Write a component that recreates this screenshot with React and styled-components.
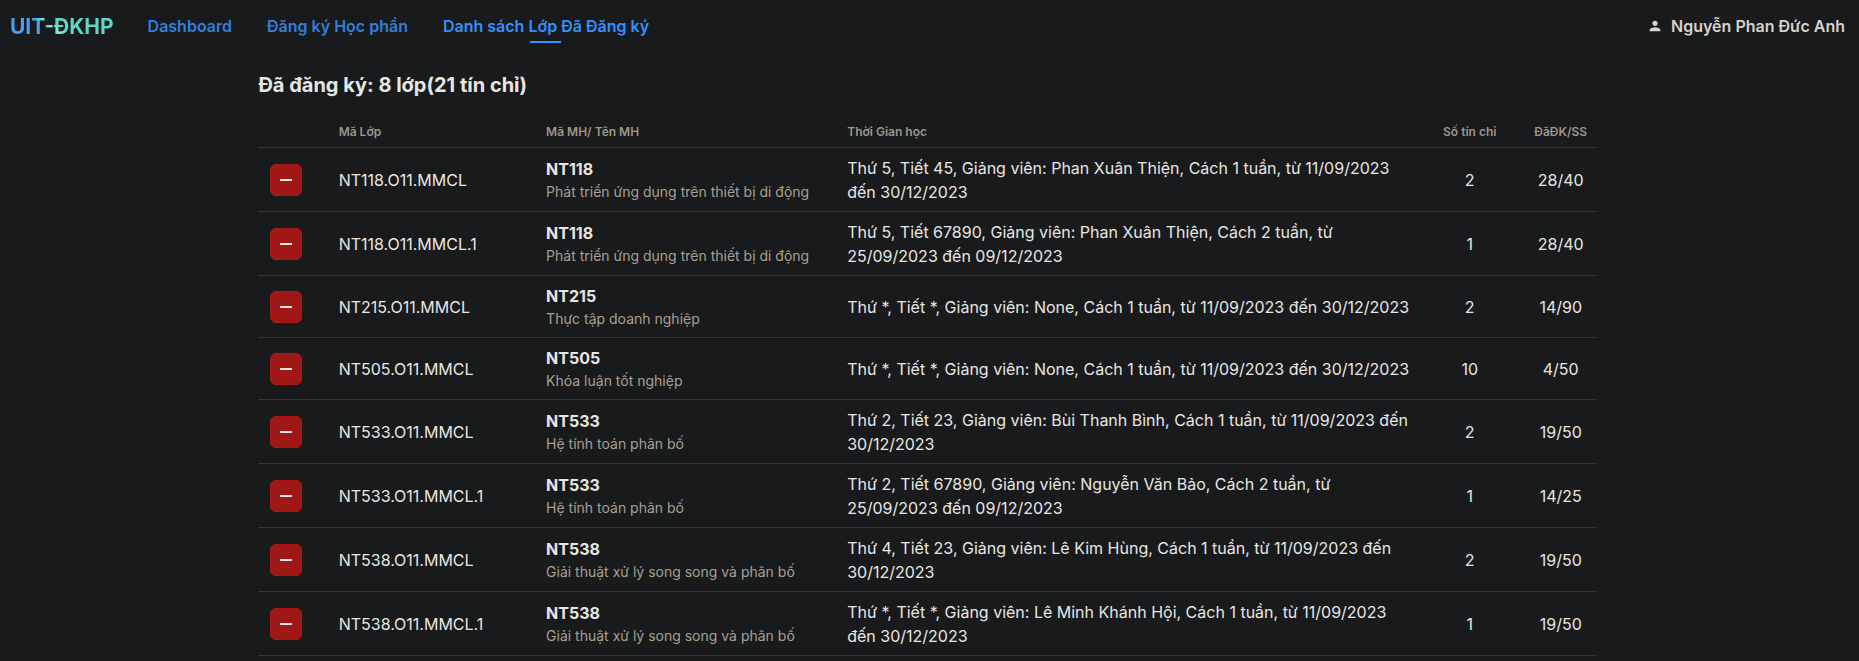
import React from 'react';
import styled, { createGlobalStyle } from 'styled-components';
import { MdPerson } from 'react-icons/md';

const Global = createGlobalStyle`
  * { box-sizing: border-box; }
  body {
    margin: 0;
    background: #181a1b;
    color: #e8e6e3;
    font-family: Inter, "Liberation Sans", sans-serif;
    font-size: 16px;
  }
`;

const Header = styled.header`
  display: flex;
  align-items: center;
  height: 52px;
  padding: 0 14px 0 10px;
`;

const Brand = styled.a`
  margin-right: 34px;
  font-size: 21px;
  font-weight: 700;
  text-decoration: none;
  color: transparent;
  background: linear-gradient(45deg, #4c9ff0 0%, #4c9ff0 35%, #7af0dc 42%, #5fd6c6 50%, #5fd6c6 100%);
  background-clip: text;
`;

const Nav = styled.nav`
  display: flex;
  gap: 35px;
  flex: 1;
`;

const NavLink = styled.a`
  position: relative;
  font-weight: 600;
  line-height: 24px;
  text-decoration: none;
  color: ${(p) => (p.$active ? '#3391ff' : '#3080dc')};

  &::after {
    content: '';
    display: ${(p) => (p.$active ? 'block' : 'none')};
    position: absolute;
    left: calc(50% - 16px);
    bottom: -5px;
    width: 31px;
    height: 2px;
    background: #3391ff;
  }
`;

const User = styled.button`
  display: flex;
  align-items: center;
  gap: 8px;
  padding: 0;
  border: 0;
  background: none;
  color: #d6d2cd;
  font: inherit;
  font-weight: 600;
`;

const Main = styled.main`
  width: 72%;
  margin: 0 auto 0 13.9%;
`;

const Title = styled.h1`
  margin: 0;
  padding: 18px 0 16px;
  font-size: 20px;
  line-height: 30px;
  font-weight: 700;
`;

const Table = styled.table`
  width: 100%;
  border-collapse: separate;
  border-spacing: 0;
  table-layout: fixed;
`;

const Col = styled.col`
  width: ${(p) => p.$w};
`;

const Th = styled.th`
  height: 32px;
  padding: 0 ${(p) => (p.$center ? 8 : 12)}px;
  border-bottom: 1px solid #213a52;
  color: #9e9689;
  font-size: 12px;
  font-weight: 600;
  white-space: nowrap;
  text-align: ${(p) => (p.$center ? 'center' : 'left')};
`;

const Td = styled.td`
  padding: 8px 0 7px ${(p) => (p.$center ? 0 : 12)}px;
  border-bottom: 1px solid #213a52;
  line-height: 24px;
  text-align: ${(p) => (p.$center ? 'center' : 'left')};
`;

const Subject = styled.div`
  font-weight: 700;
  line-height: 24px;
`;

const SubjectName = styled.div`
  color: #a8a095;
  font-size: 14px;
  line-height: 22px;
`;

const RemoveButton = styled.button`
  display: flex;
  align-items: center;
  justify-content: center;
  width: 32px;
  height: 32px;
  padding: 0;
  border: 1px solid #b01818;
  border-radius: 6px;
  background: #a01717;
  color: #e8e6e3;
`;

const rows = [
  ['NT118.O11.MMCL', 'NT118', 'Phát triển ứng dụng trên thiết bị di động', 'Thứ 5, Tiết 45, Giảng viên: Phan Xuân Thiện, Cách 1 tuần, từ 11/09/2023 đến 30/12/2023', 2, '28/40'],
  ['NT118.O11.MMCL.1', 'NT118', 'Phát triển ứng dụng trên thiết bị di động', 'Thứ 5, Tiết 67890, Giảng viên: Phan Xuân Thiện, Cách 2 tuần, từ 25/09/2023 đến 09/12/2023', 1, '28/40'],
  ['NT215.O11.MMCL', 'NT215', 'Thực tập doanh nghiệp', 'Thứ *, Tiết *, Giảng viên: None, Cách 1 tuần, từ 11/09/2023 đến 30/12/2023', 2, '14/90'],
  ['NT505.O11.MMCL', 'NT505', 'Khóa luận tốt nghiệp', 'Thứ *, Tiết *, Giảng viên: None, Cách 1 tuần, từ 11/09/2023 đến 30/12/2023', 10, '4/50'],
  ['NT533.O11.MMCL', 'NT533', 'Hệ tính toán phân bố', 'Thứ 2, Tiết 23, Giảng viên: Bùi Thanh Bình, Cách 1 tuần, từ 11/09/2023 đến 30/12/2023', 2, '19/50'],
  ['NT533.O11.MMCL.1', 'NT533', 'Hệ tính toán phân bố', 'Thứ 2, Tiết 67890, Giảng viên: Nguyễn Văn Bảo, Cách 2 tuần, từ 25/09/2023 đến 09/12/2023', 1, '14/25'],
  ['NT538.O11.MMCL', 'NT538', 'Giải thuật xử lý song song và phân bố', 'Thứ 4, Tiết 23, Giảng viên: Lê Kim Hùng, Cách 1 tuần, từ 11/09/2023 đến 30/12/2023', 2, '19/50'],
  ['NT538.O11.MMCL.1', 'NT538', 'Giải thuật xử lý song song và phân bố', 'Thứ *, Tiết *, Giảng viên: Lê Minh Khánh Hội, Cách 1 tuần, từ 11/09/2023 đến 30/12/2023', 1, '19/50'],
];

export default function App() {
  return (
    <>
      <Global />
      <Header>
        <Brand href="#">UIT-ĐKHP</Brand>
        <Nav>
          <NavLink href="#dashboard">Dashboard</NavLink>
          <NavLink href="#register">Đăng ký Học phần</NavLink>
          <NavLink href="#registered" $active>Danh sách Lớp Đã Đăng ký</NavLink>
        </Nav>
        <User type="button">
          <MdPerson size={16} aria-hidden="true" />
          Nguyễn Phan Đức Anh
        </User>
      </Header>
      <Main>
        <Title>Đã đăng ký: 8 lớp(21 tín chỉ)</Title>
        <Table>
          <colgroup>
            <Col $w="5.1%" />
            <Col $w="15.5%" />
            <Col $w="22.5%" />
            <Col />
            <Col $w="8.2%" />
            <Col $w="5.4%" />
          </colgroup>
          <thead>
            <tr>
              <Th aria-label="-" />
              <Th>Mã Lớp</Th>
              <Th>Mã MH/ Tên MH</Th>
              <Th>Thời Gian học</Th>
              <Th $center>Số tín chỉ</Th>
              <Th $center>ĐãĐK/SS</Th>
            </tr>
          </thead>
          <tbody>
            {rows.map(([id, code, name, time, credits, slots]) => (
              <tr key={id}>
                <Td>
                  <RemoveButton type="button" aria-label={id}>
                    <svg width="12" height="2" viewBox="0 0 12 2" fill="currentColor" aria-hidden="true">
                      <rect width="12" height="2" />
                    </svg>
                  </RemoveButton>
                </Td>
                <Td>{id}</Td>
                <Td>
                  <Subject>{code}</Subject>
                  <SubjectName>{name}</SubjectName>
                </Td>
                <Td>{time}</Td>
                <Td $center>{credits}</Td>
                <Td $center>{slots}</Td>
              </tr>
            ))}
          </tbody>
        </Table>
      </Main>
    </>
  );
}
